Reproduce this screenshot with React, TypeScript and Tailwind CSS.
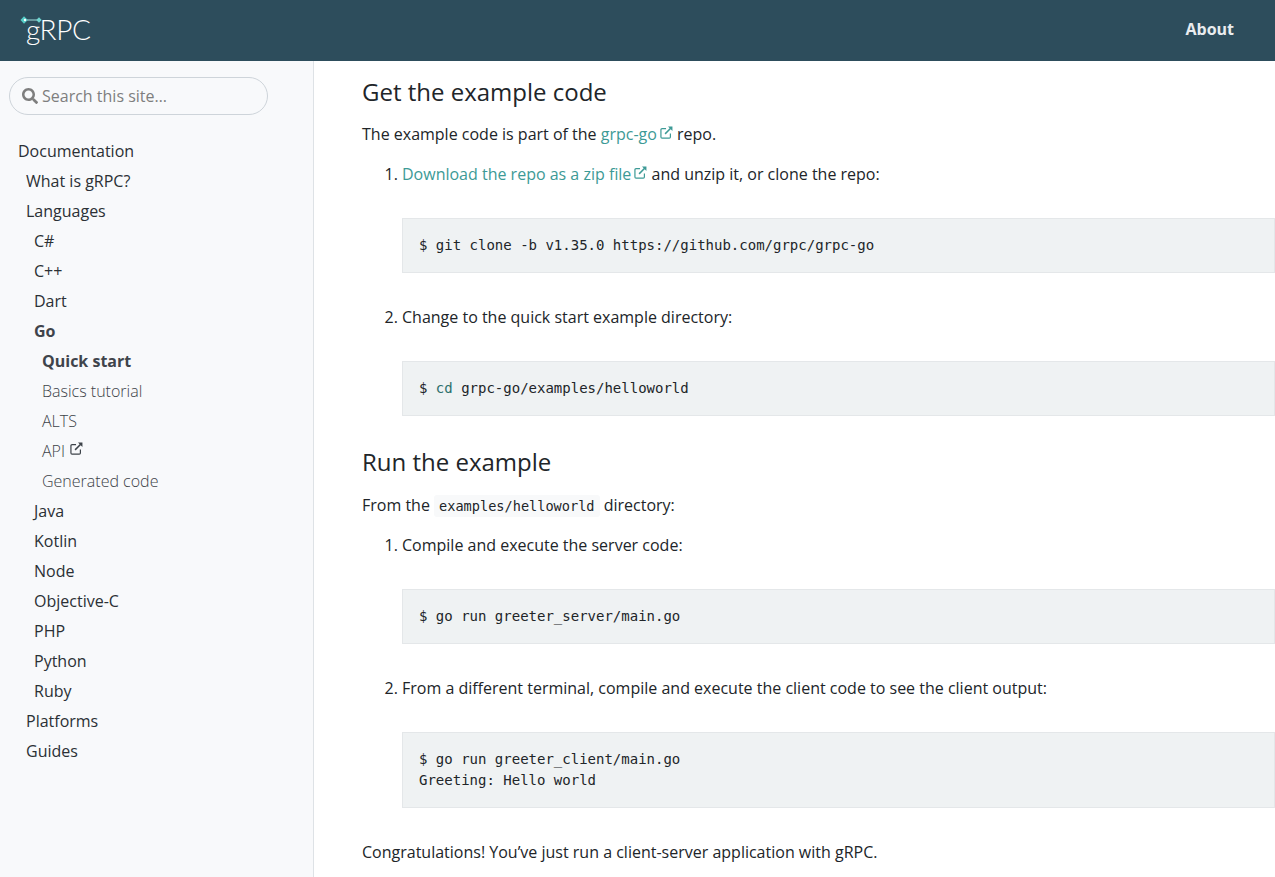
import React from "react";
import { FaSearch } from "react-icons/fa";

function Ext({ className }: { className: string }) {
  return (
    <svg viewBox="0 0 14 14" fill="none" stroke="currentColor" strokeWidth="1.3" className={className}>
      <path d="M6.5 2.8H2.2A1.2 1.2 0 0 0 1 4v7.8A1.2 1.2 0 0 0 2.2 13H10a1.2 1.2 0 0 0 1.2-1.2V8" />
      <path d="M5.5 8.5 11.5 2.5" strokeWidth="1.6" />
      <path d="M8.6 0.6h4.8v4.8Z" fill="currentColor" stroke="none" />
    </svg>
  );
}

function Logo() {
  return (
    <div className="relative h-[61px] w-[100px] shrink-0 text-white">
      <span className="absolute left-[26px] top-[11px] font-['Lato'] text-[28px] font-light leading-[36px] tracking-[-0.4px]">gRPC</span>
      <svg viewBox="0 0 24 10" className="absolute left-[20px] top-[15px] h-[10px] w-[24px]">
        <path d="M4 5H19" stroke="#a5e3e0" strokeWidth="1" />
        <path d="M0.5 5 4 1.2 7.8 5 4 8.8Z" fill="#55cdc8" />
        <path d="M19 2.3 21.7 5 19 7.7 16.3 5Z" fill="#6fd6d1" />
        <circle cx="5" cy="5" r="1.2" fill="#fff" />
      </svg>
    </div>
  );
}

const nav: [string, number, string?][] = [
  ["Documentation", 0],
  ["What is gRPC?", 1],
  ["Languages", 1],
  ["C#", 2],
  ["C++", 2],
  ["Dart", 2],
  ["Go", 2, "bold"],
  ["Quick start", 3, "bold"],
  ["Basics tutorial", 3, "light"],
  ["ALTS", 3, "light"],
  ["API", 3, "ext"],
  ["Generated code", 3, "light"],
  ["Java", 2],
  ["Kotlin", 2],
  ["Node", 2],
  ["Objective-C", 2],
  ["PHP", 2],
  ["Python", 2],
  ["Ruby", 2],
  ["Platforms", 1],
  ["Guides", 1],
];

const indent = ["pl-0", "pl-2", "pl-4", "pl-6"];

function NavRow({ label, level, kind }: { label: string; level: number; kind?: string }) {
  const tone =
    kind === "bold"
      ? "font-bold text-[#3f444b]"
      : kind === "light" || kind === "ext"
        ? "font-light text-[#3d4349]"
        : "text-[#2b3035]";
  return (
    <div className={`flex h-[30px] items-center whitespace-nowrap ${indent[level]} ${tone}`}>
      {label}
      {kind === "ext" && <Ext className="mb-[6px] ml-[5px] h-[13px] w-[13px]" />}
    </div>
  );
}

function Code({ children }: { children: React.ReactNode }) {
  return (
    <pre className="my-8 border border-[#e4e7e9] bg-[#eff2f3] px-4 py-4 font-['DejaVu_Sans_Mono'] text-[14px] leading-[21px] text-[#212529]">
      {children}
    </pre>
  );
}

function ExtLink({ children }: { children: React.ReactNode }) {
  return (
    <a className="text-[#3d9a96]">
      {children}
      <Ext className="mb-[6px] ml-[3px] inline-block h-[13px] w-[13px]" />
    </a>
  );
}

export default function App() {
  return (
    <div className="flex h-[877px] flex-col overflow-hidden bg-white font-['Open_Sans'] text-base leading-6 text-[#212529]">
      <header className="flex h-[61px] shrink-0 items-center justify-between bg-[#2d4d5c] pr-[41px]">
        <Logo />
        <span className="mb-1 font-bold text-[#e9ecef]">About</span>
      </header>
      <div className="flex min-h-0 flex-1">
        <aside className="w-[314px] shrink-0 border-r border-[#dee2e6] bg-[#f8f9fb] pl-[9px] pt-4">
          <div className="flex h-[38px] w-[259px] items-center gap-1 rounded-[19px] border border-[#ced4da] bg-[#f8f9fb] pl-3 text-[#7e7e7e]">
            <FaSearch className="h-4 w-4 shrink-0" />
            <span>Search this site…</span>
          </div>
          <nav className="mt-[21px] pl-[9px]">
            {nav.map(([label, level, kind]) => (
              <NavRow key={label} label={label} level={level} kind={kind} />
            ))}
          </nav>
        </aside>
        <main className="min-w-0 flex-1 pl-12 pt-4">
          <h2 className="text-[24px] leading-[29px]">Get the example code</h2>
          <p className="mt-4">
            The example code is part of the <ExtLink>grpc-go</ExtLink> repo.
          </p>
          <ol className="mt-4 list-decimal pl-10">
            <li>
              <ExtLink>Download the repo as a zip file</ExtLink> and unzip it, or clone the repo:
              <Code>$ git clone -b v1.35.0 https://github.com/grpc/grpc-go</Code>
            </li>
            <li>
              Change to the quick start example directory:
              <Code>
                $ <span className="text-[#2b6f6b]">cd</span> grpc-go/examples/helloworld
              </Code>
            </li>
          </ol>
          <h2 className="-mt-px text-[24px] leading-[29px]">Run the example</h2>
          <p className="mt-[17px]">
            From the{" "}
            <code className="rounded-[3px] bg-[#f8f9fa] px-[5px] py-[3px] font-['DejaVu_Sans_Mono'] text-[13.6px] leading-none">examples/helloworld</code>{" "}
            directory:
          </p>
          <ol className="mt-4 list-decimal pl-10">
            <li>
              Compile and execute the server code:
              <Code>$ go run greeter_server/main.go</Code>
            </li>
            <li>
              From a different terminal, compile and execute the client code to see the client output:
              <Code>
                {"$ go run greeter_client/main.go\nGreeting: Hello world"}
              </Code>
            </li>
          </ol>
          <p>Congratulations! You’ve just run a client-server application with gRPC.</p>
        </main>
      </div>
    </div>
  );
}
